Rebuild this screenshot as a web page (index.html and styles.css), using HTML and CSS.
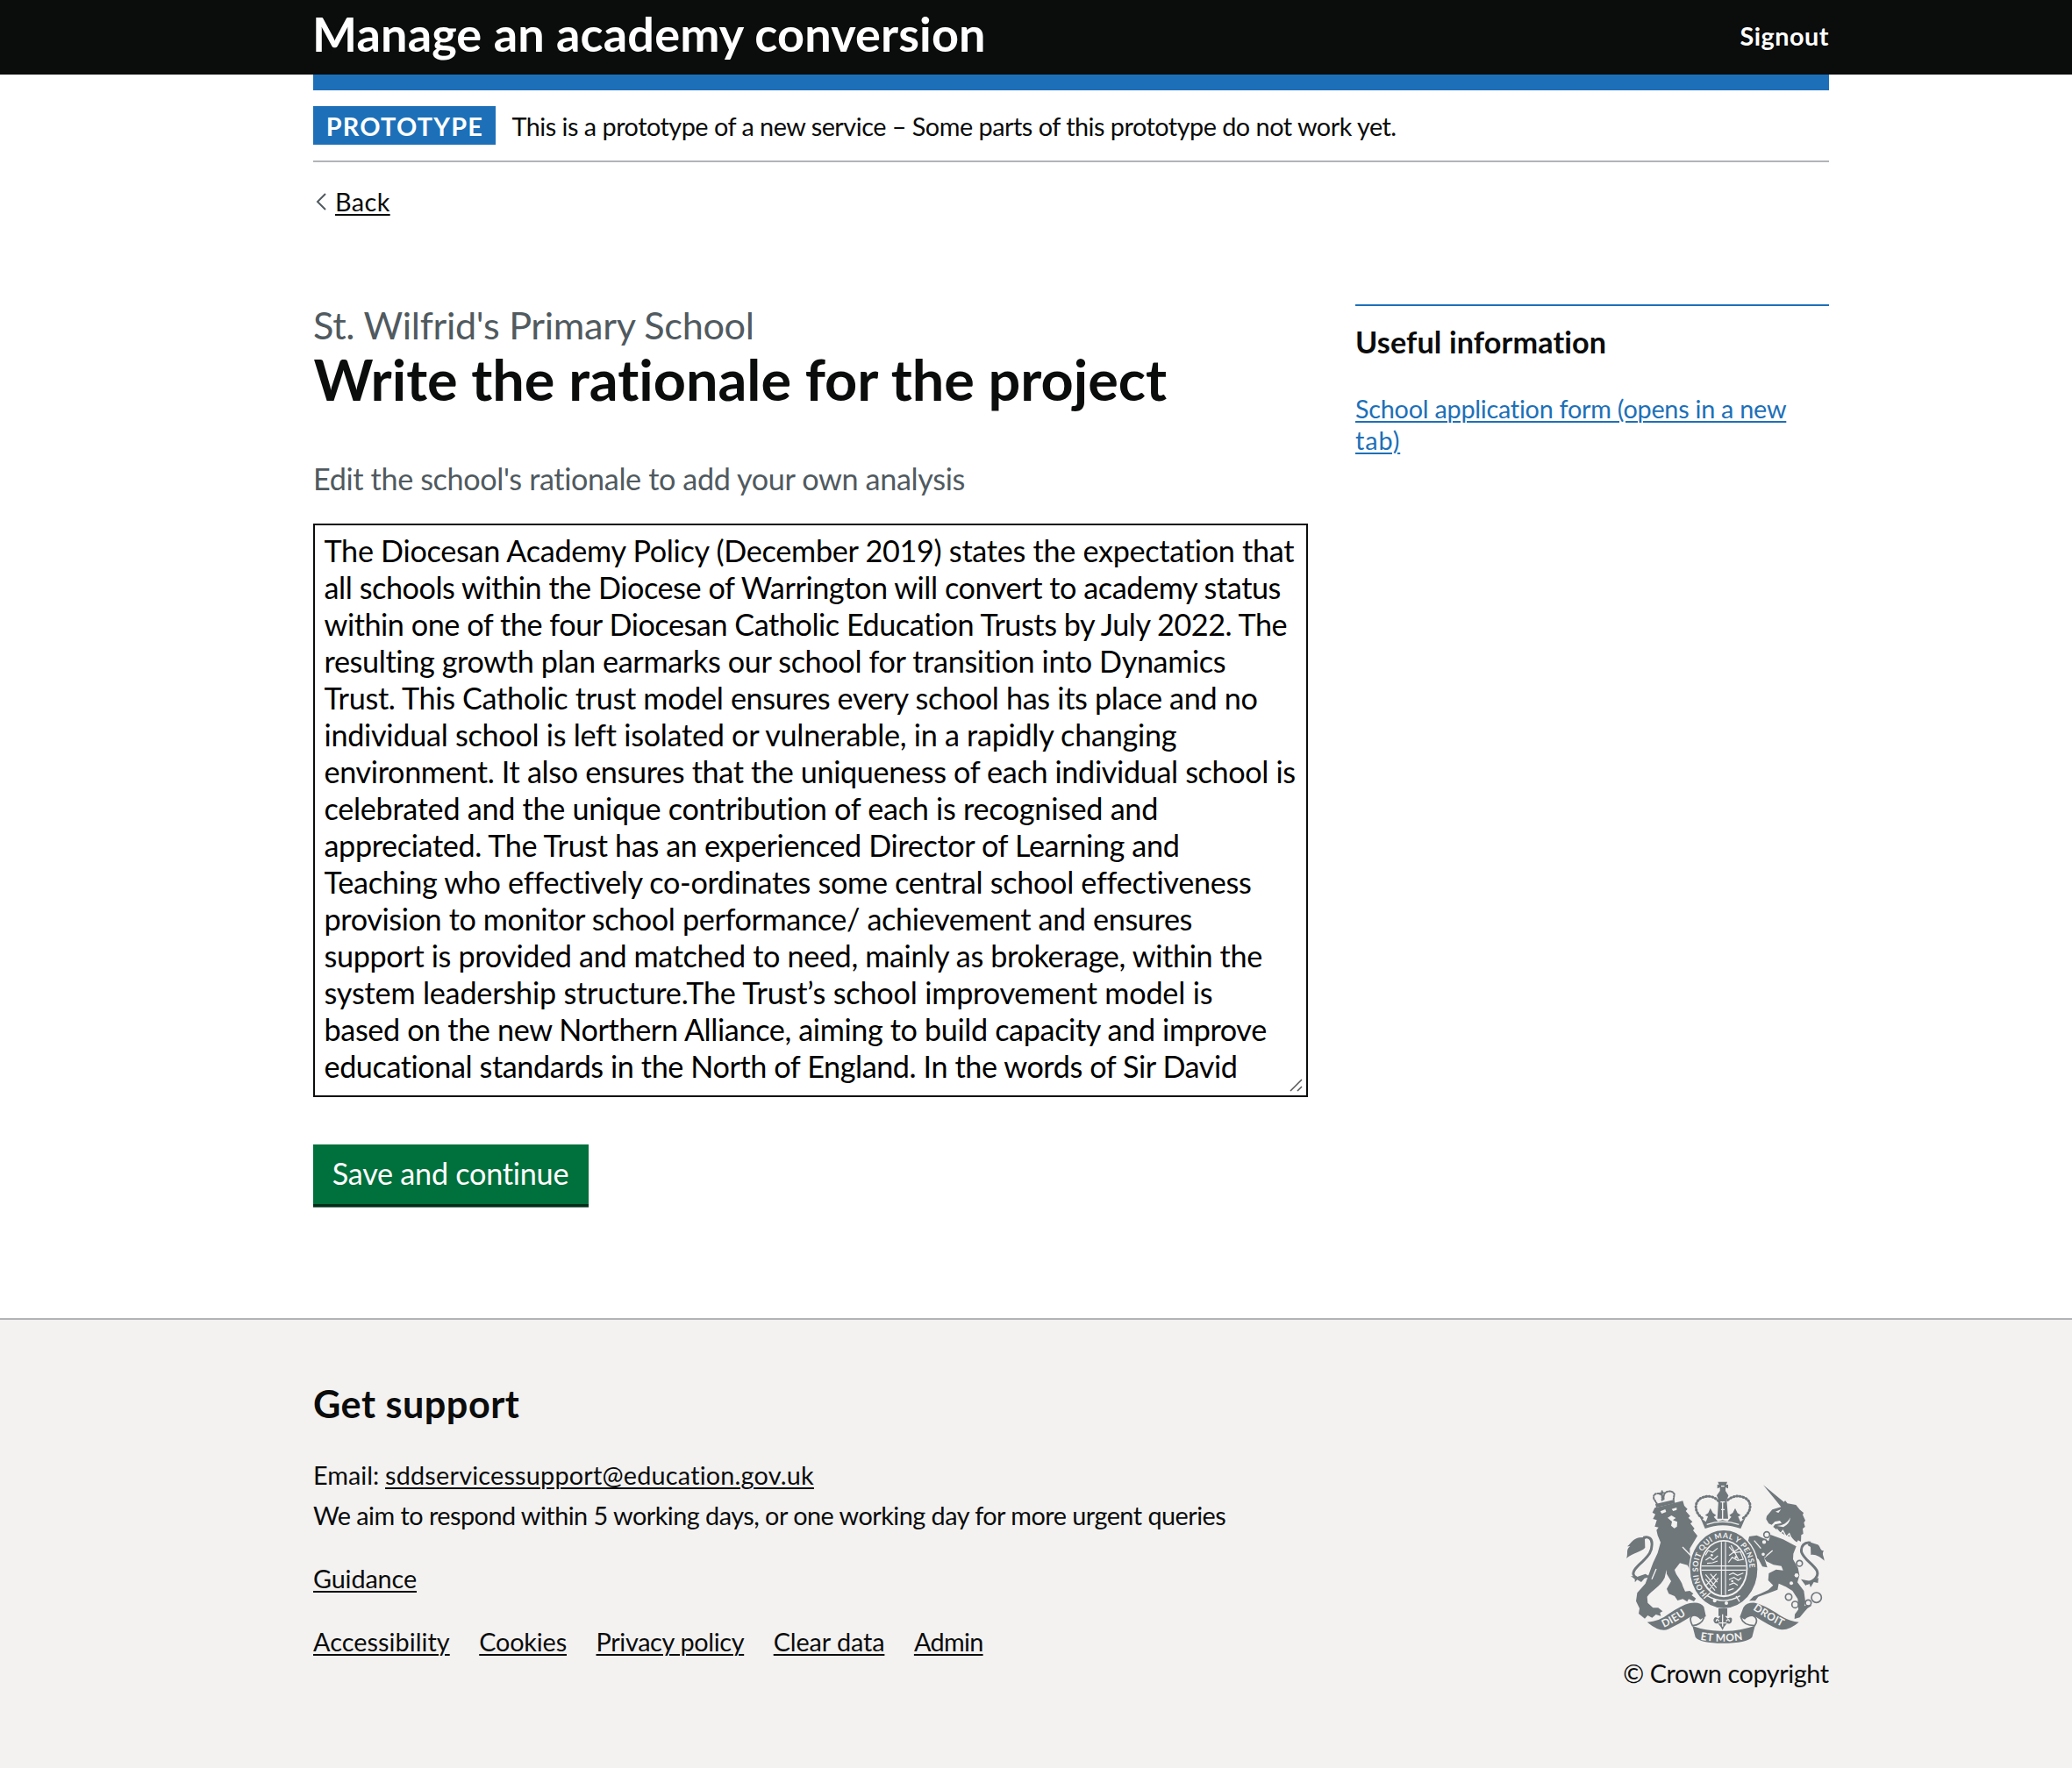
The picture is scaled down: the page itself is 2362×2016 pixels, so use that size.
FILE: index.html
```html
<!DOCTYPE html>
<html lang="en">
<head>
<meta charset="utf-8">
<title>Write the rationale for the project – Manage an academy conversion</title>
<link rel="stylesheet" href="styles.css">
</head>
<body>
<header class="header">
  <div class="container header-row">
    <a class="service-name" href="#">Manage an academy conversion</a>
    <a class="signout" href="#">Signout</a>
  </div>
</header>
<div class="container">
  <div class="header-bar"></div>
  <div class="phase-banner">
    <strong class="tag">PROTOTYPE</strong>
    <span class="phase-text">This is a prototype of a new service – Some parts of this prototype do not work yet.</span>
  </div>
  <div class="back">
    <svg class="back-arrow" viewBox="0 0 12 20"><path d="M11 1 2 10 11 19" fill="none" stroke="#505a5f" stroke-width="2"/></svg>
    <a class="link back-link" href="#">Back</a>
  </div>
  <div class="columns">
    <main>
      <span class="caption">St. Wilfrid's Primary School</span>
      <h1 class="heading">Write the rationale for the project</h1>
      <div class="hint">Edit the school's rationale to add your own analysis</div>
      <div class="textarea" role="textbox" aria-multiline="true">
        <p>The Diocesan Academy Policy (December 2019) states the expectation that</p>
        <p>all schools within the Diocese of Warrington will convert to academy status</p>
        <p>within one of the four Diocesan Catholic Education Trusts by July 2022. The</p>
        <p>resulting growth plan earmarks our school for transition into Dynamics</p>
        <p>Trust. This Catholic trust model ensures every school has its place and no</p>
        <p>individual school is left isolated or vulnerable, in a rapidly changing</p>
        <p>environment. It also ensures that the uniqueness of each individual school is</p>
        <p>celebrated and the unique contribution of each is recognised and</p>
        <p>appreciated. The Trust has an experienced Director of Learning and</p>
        <p>Teaching who effectively co-ordinates some central school effectiveness</p>
        <p>provision to monitor school performance/ achievement and ensures</p>
        <p>support is provided and matched to need, mainly as brokerage, within the</p>
        <p>system leadership structure.The Trust’s school improvement model is</p>
        <p>based on the new Northern Alliance, aiming to build capacity and improve</p>
        <p>educational standards in the North of England. In the words of Sir David</p>
        <svg class="grip" viewBox="0 0 15 15"><path d="M1 14 14 1M9 14 14 9" fill="none" stroke="#555" stroke-width="1.5"/></svg>
      </div>
      <button class="button" type="button">Save and continue</button>
    </main>
    <aside class="sidebar">
      <h2 class="sidebar-heading">Useful information</h2>
      <a class="link sidebar-link" href="#">School application form (opens in a new<br><span class="last-word">tab)</span></a>
    </aside>
  </div>
</div>
<footer class="footer">
  <div class="container footer-row">
    <div>
      <h2 class="footer-heading">Get support</h2>
      <p class="footer-line"><span class="email-label">Email:</span><a class="link email" href="#">sddservicessupport@education.gov.uk</a></p>
      <p class="footer-line respond">We aim to respond within 5 working days, or one working day for more urgent queries</p>
      <p class="footer-line guidance"><a class="link" href="#">Guidance</a></p>
      <nav class="footer-links">
        <a class="link accessibility" href="#">Accessibility</a>
        <a class="link cookies" href="#">Cookies</a>
        <a class="link privacy" href="#">Privacy policy</a>
        <a class="link clear" href="#">Clear data</a>
        <a class="link admin" href="#">Admin</a>
      </nav>
    </div>
    <div class="copyright">
      <svg class="crest" viewBox="75 55 680 555">
        <defs>
          <path id="motto" d="M351 440A88 108 0 1 1 465 440"/>
          <path id="dieu" d="M203 556Q250 535 300 496"/>
          <path id="etmon" d="M328 597Q405 610 486 595"/>
          <path id="droit" d="M507 494Q560 530 614 556"/>
        </defs>
        <g class="ink">
          <!-- lion -->
          <path d="M164 162L172 146L202 139L268 122L273 139L284 150L278 157L293 174L287 180L301 194L294 200L308 217L303 223L318 242L306 262L292 285L292 310L313 340L312 366L304 358L302 374L292 357L284 342L258 335L240 358C245 380 262 390 268 414L276 432L292 430L304 440L298 445L313 456L306 466L288 458L283 467L268 458L250 463L240 448L220 440L213 423L228 397L213 372L212 358L206 385C192 415 160 430 146 450L148 471L166 488L184 488L199 500L190 505L193 516L176 511L163 522L148 514L138 525L117 508L120 490L108 465L112 437L140 405L166 335L182 300L192 264L182 240L178 222L185 213L172 210L179 188L166 184L174 168Z"/>
          <path class="line thick" d="M110 385C84 372 108 350 130 330C152 308 162 295 162 275C165 250 150 242 133 248"/>
          <path d="M75 319C82 306 72 286 88 278L78 278C94 265 96 253 118 248L144 246L138 254L139 282C127 297 98 298 75 319ZM90 379L112 382L140 372L158 382L137 387L126 400L112 392L104 401L104 390Z"/>
          <!-- lion's crown -->
          <path d="M174 133L239 118L241 130L177 145Z"/>
          <path class="line dotted" d="M179 131L169 115Q165 99 180 97Q196 94 203 119Q200 96 214 91Q232 86 239 99L236 119M197 89V122M188 98L197 93L206 96"/>
          <!-- unicorn -->
          <path d="M543 68L614 126L618 121L626 131L655 136L669 153L681 163L678 170L687 189L682 197L686 211L678 217L680 235L673 239L672 262L662 257L657 266L640 247L615 238L591 223L577 211L583 203L606 198L600 190L583 193L572 204L562 200L553 185L555 174L574 152L604 143Z"/>
          <path d="M568 238L611 254L656 278L646 303L645 322L662 352L667 377L660 401L682 430L687 465L684 482L698 475L709 480L694 490L681 505L668 521L650 526L651 510L663 494L661 458L643 430L620 416L596 405L592 426L560 438L526 450L516 464L495 464L510 449L535 439L560 427L577 411L560 394L562 370L587 357L611 360L605 345L578 341L554 329L546 317L557 350L540 347L527 322L505 306L497 284L490 266L495 244L521 240L543 250L561 260Z"/>
          <path class="line thick" d="M692 405C720 395 735 379 726 360C710 335 685 325 674 298C670 276 685 262 705 266"/>
          <path d="M752 327C751 310 742 306 750 293C734 292 741 272 724 270L701 263L695 274L705 280L706 307C720 303 738 313 752 327ZM672 390L690 394L710 397L732 385L730 403L716 400L705 418L700 403L688 412Z"/>
          <!-- royal crown -->
          <path d="M388 57H420L416 68L423 66V80L414 76L414 88L424 104L418 119L423 183H386L390 119L384 104L395 88L395 76L386 80V66L392 68Z"/>
          <path d="M328 180L347 194L354 176L344 171L355 164L362 147L371 164L382 171L374 177L388 192L404 188L421 192L434 177L427 171L439 163L447 147L455 164L466 171L457 176L465 194L482 180L466 217Q404 194 344 217Z"/>
          <path class="line dotted wide" d="M334 181C306 160 306 125 332 112C352 103 373 105 389 122M475 181C503 160 507 125 480 112C458 101 435 106 419 122"/>
          <!-- garter -->
          <ellipse class="garter" cx="408" cy="356" rx="117" ry="135"/>
        </g>
        <g class="paper">
          <ellipse cx="408" cy="354" rx="82" ry="98"/>
          <path d="M191 158L208 151L211 160L196 166ZM230 150L247 145L247 153L235 157ZM216 180L229 172L244 181L234 188L249 194L248 210L239 216L228 207L231 193Z"/>
          <path d="M585 159L604 151L595 163ZM590 208Q622 206 636 179Q634 200 612 212ZM568 225L577 214L611 237L661 265L657 275L615 251Z"/>
          <circle cx="377" cy="464" r="6"/><circle cx="417" cy="472" r="6"/>
          <circle cx="657" cy="377" r="7"/><circle cx="639" cy="404" r="6"/>
        </g>
        <g class="cut">
          <path d="M350 203Q404 184 460 203M397 126H412M399 152H411M404 126V185M399 72H410"/>
          <path d="M352 447Q407 480 464 447M340 456L362 437M462 467L450 448"/>
          <path d="M267 280L293 307M177 355L162 390M575 292L547 316M512 258L535 285M589 218L602 235L610 224L622 245L632 234L642 257"/>
        </g>
        <g class="ink">
          <ellipse cx="408" cy="353" rx="77" ry="92"/>
        </g>
        <g class="cut arms">
          <path d="M400 263V444M414 263V444M332 345H484M332 359H484"/>
          <path d="M345 308L355 292L370 298L387 284M346 325L360 315L372 324L388 310M351 336L370 334L387 328M426 279L444 300L465 296L475 322L455 326L437 315L424 333M433 274L458 323M426 309L461 284M426 375L440 369L455 377L475 369M426 392L443 384L458 394L468 385M426 410L443 403L456 411M423 429L442 422M346 374L383 420M346 390L378 429M362 372L386 400M383 372L349 410M389 386L358 427"/>
        </g>
        <g class="cutfill"><circle cx="367" cy="308" r="4"/><circle cx="449" cy="315" r="4"/><circle cx="437" cy="397" r="4"/></g>
        <g class="ink">
          <path d="M146 537Q187 535 221 508Q264 479 292 472Q328 466 340 485L347 517L328 528Q314 512 296 518Q258 543 218 561Q190 573 146 537Z"/>
          <path d="M665 537Q624 533 587 505Q543 477 515 471Q486 469 475 487L463 519L480 528Q496 512 519 520Q561 547 592 560Q625 571 665 537Z"/>
          <path d="M301 550Q352 569 406 567Q462 568 515 549L505 588Q487 609 405 609Q326 609 311 588Z"/>
          <path d="M390 490H420V516H412L421 525Q438 515 436 531Q434 546 419 541L409 554L404 564L398 554L388 541Q373 544 373 529Q377 514 389 525L397 516H390Z"/>
        </g>
        <g class="cut">
          <path d="M404 510V552M392 534Q383 521 382 535M416 534Q426 521 427 535M390 540H418"/>
        </g>
        <g class="line curl">
          <path d="M340 521Q319 500 298 517Q289 527 301 549Q331 548 341 521M466 520Q491 499 513 518Q527 529 514 549Q475 549 466 520"/>
        </g>
        <g class="ring">
          <circle cx="555" cy="238" r="10"/><circle cx="546" cy="263" r="9"/><circle cx="543" cy="305" r="8"/><circle cx="667" cy="336" r="10"/>
          <circle cx="630" cy="451" r="11"/><circle cx="652" cy="477" r="11"/><circle cx="697" cy="471" r="10"/><circle cx="725" cy="453" r="17"/>
        </g>
        <text class="motto"><textPath href="#motto">HONI SOIT QUI MAL Y PENSE</textPath></text>
        <text class="scroll"><textPath href="#dieu">DIEU</textPath></text>
        <text class="scroll"><textPath href="#etmon">ET MON</textPath></text>
        <text class="scroll"><textPath href="#droit">DROIT</textPath></text>
      </svg>
      <span class="copyright-text">© Crown copyright</span>
    </div>
  </div>
</footer>
</body>
</html>
```
FILE: styles.css
```css
* { box-sizing: border-box; }
body {
  margin: 0;
  min-height: 2016px;
  display: flex;
  flex-direction: column;
  background: #fff;
  color: #0b0c0c;
  font: 400 28.8px/36px Lato, "Open Sans", sans-serif;
  font-variant-ligatures: none;
}
h1, h2, p { margin: 0; }
.container { width: 1728px; margin-left: 357px; }
.link {
  color: #0b0c0c;
  text-decoration: underline;
  text-decoration-thickness: 2px;
  text-underline-offset: 3px;
}

/* Header */
.header { background: #0b0c0c; height: 85px; }
.header-row { display: flex; justify-content: space-between; align-items: center; height: 77px; white-space: nowrap; }
.service-name { margin-left: -1px; padding-top: 1px; font-size: 54px; line-height: 60px; font-weight: 700; letter-spacing: 0.15px; color: #fff; text-decoration: none; }
.signout { padding-top: 4px; font-weight: 700; letter-spacing: 0.5px; color: #fff; text-decoration: none; }
.header-bar { height: 18px; background: #1d70b8; }

.phase-banner { display: flex; gap: 18.4px; padding: 18px 0; border-bottom: 2px solid #b1b4b6; line-height: 44px; white-space: nowrap; }
.tag { width: 208px; height: 44px; padding: 1px 0 0 14.7px; background: #1d70b8; color: #fff; font-weight: 700; letter-spacing: 1.25px; }
.phase-text { height: 44px; padding-top: 1px; letter-spacing: -0.49px; }

.back { display: flex; align-items: center; gap: 10px; margin-top: 27px; padding-left: 3px; }
.back-arrow { width: 12px; height: 20px; }
.back-link { letter-spacing: 0.4px; }

/* Main content */
.columns { display: grid; grid-template-columns: 1134px 540px; gap: 54px; padding-top: 99px; }
.caption { display: block; margin-top: 1px; font-size: 43.2px; line-height: 44px; letter-spacing: -0.3px; color: #505a5f; }
.heading { margin-top: 4px; padding-left: 0.5px; font-size: 64.8px; line-height: 72px; font-weight: 700; letter-spacing: -0.03px; white-space: nowrap; }
.hint { margin-top: 57px; font-size: 34.2px; line-height: 42px; letter-spacing: -0.37px; color: #505a5f; }
.textarea { position: relative; height: 654px; margin-top: 30px; padding: 7.5px 0 0 10.5px; border: 2px solid #0b0c0c; font-size: 34.2px; line-height: 42px; letter-spacing: -0.33px; color: #000; white-space: nowrap; overflow: hidden; }
.textarea p:nth-child(1) { letter-spacing: -0.29px; }
.textarea p:nth-child(2) { letter-spacing: -0.43px; }
.textarea p:nth-child(3) { letter-spacing: -0.45px; }
.textarea p:nth-child(4) { letter-spacing: -0.36px; }
.textarea p:nth-child(6) { letter-spacing: -0.28px; }
.textarea p:nth-child(7) { letter-spacing: -0.35px; }
.textarea p:nth-child(8) { letter-spacing: -0.29px; }
.textarea p:nth-child(9) { letter-spacing: -0.37px; }
.textarea p:nth-child(10) { letter-spacing: -0.31px; }
.textarea p:nth-child(11) { letter-spacing: -0.37px; }
.textarea p:nth-child(12) { letter-spacing: -0.35px; }
.textarea p:nth-child(13) { letter-spacing: -0.19px; }
.textarea p:nth-child(14) { letter-spacing: -0.37px; }
.textarea p:nth-child(15) { letter-spacing: -0.42px; }
.grip { position: absolute; right: 4px; bottom: 4px; width: 15px; height: 15px; }
.button { display: block; width: 314px; height: 68px; margin: 54px 0 0; padding: 0 0 2px 21.7px; border: 0; background: #00703c; box-shadow: 0 3.6px 0 #002d18; color: #fff; font: 400 34.2px/42px Lato, "Open Sans", sans-serif; letter-spacing: -0.25px; text-align: left; }

.sidebar { border-top: 2px solid #1d70b8; padding-top: 18.5px; align-self: start; }
.sidebar-heading { margin-bottom: 36px; font-size: 34.2px; line-height: 44px; font-weight: 700; letter-spacing: 0.13px; }
.sidebar-link { color: #1d70b8; letter-spacing: -0.25px; }
.last-word { letter-spacing: 0.9px; }

/* Footer */
.footer { flex: 1; margin-top: 130px; border-top: 2px solid #b1b4b6; background: #f3f2f1; }
.footer-row { display: flex; justify-content: space-between; align-items: flex-start; }
.footer-heading { padding-top: 70px; font-size: 43.2px; line-height: 50px; font-weight: 700; letter-spacing: 0.5px; }
.footer-line { margin-top: 10px; white-space: nowrap; }
.footer-heading + .footer-line { margin-top: 39px; }
.email-label { display: inline-block; width: 82px; }
.email { letter-spacing: 0.21px; }
.respond { letter-spacing: -0.51px; }
.footer-line.guidance { margin-top: 36px; letter-spacing: -0.12px; }
.footer-links { display: flex; gap: 33.5px; margin-top: 36px; white-space: nowrap; }
.accessibility { letter-spacing: 0.05px; }
.cookies { letter-spacing: -0.15px; }
.privacy { letter-spacing: -0.33px; }
.clear { letter-spacing: -0.1px; }
.admin { letter-spacing: -0.65px; }
.copyright { display: flex; flex-direction: column; align-items: center; width: 235px; padding-top: 184px; }
.crest { display: block; width: 226.7px; height: 185px; margin-bottom: 16px; }
.copyright-text { letter-spacing: -0.42px; white-space: nowrap; }

/* Royal arms */
.ink { fill: #6f777b; }
.garter { stroke: #f3f2f1; stroke-width: 4; }
.paper, .cutfill { fill: #f3f2f1; }
.cut { fill: none; stroke: #f3f2f1; stroke-width: 4; }
.arms { stroke-width: 3.5; }
.line { fill: none; stroke: #6f777b; stroke-width: 5; }
.line.thick { stroke-width: 9; }
.line.dotted { stroke-width: 6; stroke-linecap: round; stroke-dasharray: 4 5; }
.line.wide { stroke-width: 9; stroke-dasharray: 3 8; }
.ring { fill: #f3f2f1; stroke: #6f777b; stroke-width: 5; }
.motto { fill: #f3f2f1; font: 700 26px Lato, sans-serif; letter-spacing: 1.5px; }
.scroll { fill: #f3f2f1; font: 700 36px Lato, sans-serif; letter-spacing: 1px; }
```
